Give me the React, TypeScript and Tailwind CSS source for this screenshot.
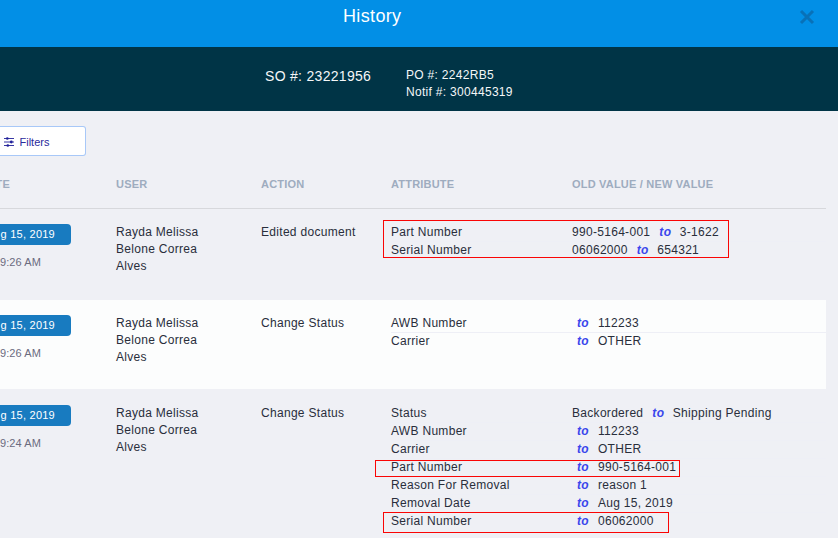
type Change = { attribute: string; from?: string; to: string };
type Entry = { time: string; action: string; changes: Change[]; style: string };

const entries: Entry[] = [
  {
    time: '9:26 AM',
    action: 'Edited document',
    style: 'h-[91px] pt-[15px]',
    changes: [
      { attribute: 'Part Number', from: '990-5164-001', to: '3-1622' },
      { attribute: 'Serial Number', from: '06062000', to: '654321' },
    ],
  },
  {
    time: '9:26 AM',
    action: 'Change Status',
    style: 'h-[89px] pt-[15px] bg-[#fcfdfd]',
    changes: [
      { attribute: 'AWB Number', to: '112233' },
      { attribute: 'Carrier', to: 'OTHER' },
    ],
  },
  {
    time: '9:24 AM',
    action: 'Change Status',
    style: 'h-[149px] pt-[16px]',
    changes: [
      { attribute: 'Status', from: 'Backordered', to: 'Shipping Pending' },
      { attribute: 'AWB Number', to: '112233' },
      { attribute: 'Carrier', to: 'OTHER' },
      { attribute: 'Part Number', to: '990-5164-001' },
      { attribute: 'Reason For Removal', to: 'reason 1' },
      { attribute: 'Removal Date', to: 'Aug 15, 2019' },
      { attribute: 'Serial Number', to: '06062000' },
    ],
  },
];

function FilterIcon() {
  return (
    <svg width="10" height="10" viewBox="0 0 10 10" className="shrink-0" stroke="#20209a" fill="#20209a">
      <path d="M0 1.5H10M0 5H10M0 8.5H10" strokeWidth="0.9" />
      <circle cx="3.3" cy="1.5" r="1.3" stroke="none" />
      <circle cx="7.3" cy="5" r="1.4" stroke="none" />
      <circle cx="3.8" cy="8.5" r="1.3" stroke="none" />
    </svg>
  );
}

function Row({ entry }: { entry: Entry }) {
  return (
    <div className={`grid grid-cols-[116px_145px_130px_435px] items-start ${entry.style}`}>
      <div>
        <div className="flex h-[21px] w-[71px] items-center justify-end rounded-r-[4px] bg-[#187bc0] pr-[16px] text-[11px] tracking-[0.25px] whitespace-nowrap text-white">
          g 15, 2019
        </div>
        <div className="mt-[9px] w-[41px] text-right text-[11px] leading-[17px] tracking-[0.1px] whitespace-nowrap text-[#6b6b7f]">
          {entry.time}
        </div>
      </div>
      <div className="w-[100px]">Rayda Melissa Belone Correa Alves</div>
      <div>{entry.action}</div>
      <div>
        {entry.changes.map((change) => (
          <div key={change.attribute} className="grid h-[18px] grid-cols-[181px_1fr] border-b border-[#eeeff6] last:border-b-0">
            <div>{change.attribute}</div>
            <div className="whitespace-nowrap">
              {change.from}
              <span className={`${change.from ? 'mr-[8.5px] ml-[9px]' : 'mr-[9px] ml-[5px]'} font-bold text-[#3a46ec] italic`}>to</span>
              {change.to}
            </div>
          </div>
        ))}
      </div>
    </div>
  );
}

export default function App() {
  return (
    <div className="relative h-[538px] w-[838px] overflow-hidden bg-[#eff0f5] font-['Liberation_Sans',Arial,sans-serif] text-[12px] leading-[17px] tracking-[0.3px] text-[#292e3b]">
      <header className="flex h-[47px] items-start justify-between bg-[#028fe6] pt-[4px] pr-[23px] pl-[343px] text-white">
        <h1 className="text-[18px] leading-[24px] tracking-[0.35px]">History</h1>
        <svg width="16" height="16" viewBox="0 0 16 16" className="mt-[5px]" stroke="#0871b8" strokeWidth="3">
          <path d="M2 2 14 14M14 2 2 14" />
        </svg>
      </header>
      <div className="flex h-[64px] bg-[#003446] pt-[20px] pl-[265px] text-[#f4f7f8]">
        <div className="w-[141px] text-[14px] leading-[18px]">SO #: 23221956</div>
        <div className="leading-[17px]">
          <div>PO #: 2242RB5</div>
          <div>Notif #: 300445319</div>
        </div>
      </div>
      <button className="mt-[15px] flex h-[30px] w-[86px] items-center gap-[5.5px] rounded-r-[3px] border border-l-0 border-[#a8c8f8] bg-white pt-[2px] pl-[4px] text-[11px] tracking-normal text-[#2a2a9c]">
        <FilterIcon />
        Filters
      </button>
      <div className="w-[826px]">
        <div className="grid h-[53px] grid-cols-[116px_145px_130px_181px_1fr] border-b border-[#d7d8dc] pt-[20px] text-[11px] font-bold tracking-[0.2px] text-[#9eacbf]">
          <div className="flex w-[10px] justify-end">TE</div>
          <div>USER</div>
          <div>ACTION</div>
          <div>ATTRIBUTE</div>
          <div>OLD VALUE / NEW VALUE</div>
        </div>
        {entries.map((entry, index) => (
          <Row key={index} entry={entry} />
        ))}
      </div>
      <div className="absolute top-[220px] left-[383px] h-[38px] w-[346px] border border-[#fa0505]" />
      <div className="absolute top-[460px] left-[375px] h-[17px] w-[305px] border border-[#fa0505]" />
      <div className="absolute top-[512px] left-[383px] h-[21px] w-[286px] border border-[#fa0505]" />
    </div>
  );
}
